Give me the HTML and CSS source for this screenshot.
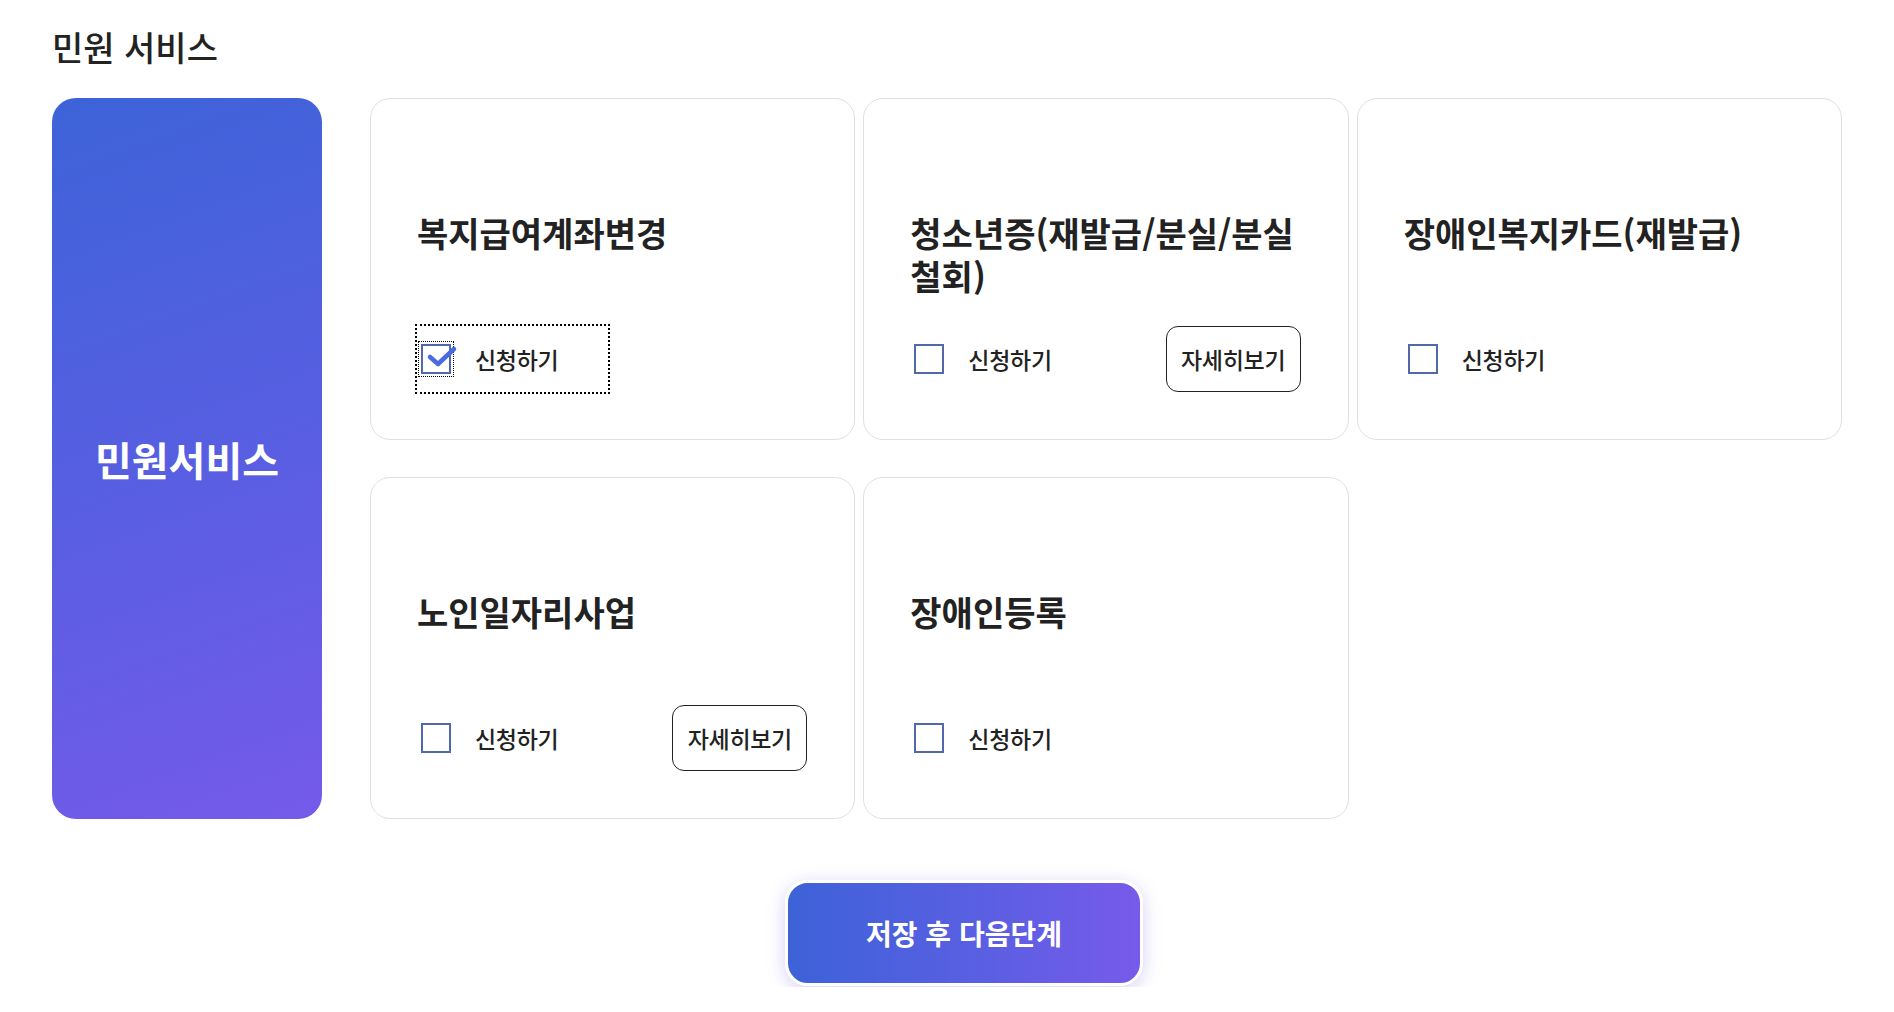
FILE: index.html
```html
<!DOCTYPE html>
<html lang="ko">
<head>
<meta charset="utf-8">
<title>민원 서비스</title>
<link rel="stylesheet" href="styles.css">
</head>
<body>
<div class="page">
  <h2 class="page-title">민원 서비스</h2>
  <div class="section">
    <div class="side-panel">민원서비스</div>
    <div class="card-grid">
      <div class="card">
        <h3 class="card-title">복지급여계좌변경</h3>
        <div class="card-row">
          <label class="apply focused">
            <span class="box checked">
              <svg class="check" viewBox="0 0 30 30" width="30" height="30"><path d="M9 13 L17 20 L33 5" fill="none" stroke="#4a6ae0" stroke-width="4.5" stroke-linecap="round" stroke-linejoin="round"/></svg>
            </span>
            <span class="apply-text">신청하기</span>
          </label>
        </div>
      </div>
      <div class="card">
        <h3 class="card-title">청소년증(재발급/분실/분실철회)</h3>
        <div class="card-row">
          <label class="apply"><span class="box"></span><span class="apply-text">신청하기</span></label>
          <button class="detail-btn">자세히보기</button>
        </div>
      </div>
      <div class="card">
        <h3 class="card-title">장애인복지카드(재발급)</h3>
        <div class="card-row">
          <label class="apply"><span class="box"></span><span class="apply-text">신청하기</span></label>
        </div>
      </div>
      <div class="card">
        <h3 class="card-title">노인일자리사업</h3>
        <div class="card-row">
          <label class="apply"><span class="box"></span><span class="apply-text">신청하기</span></label>
          <button class="detail-btn">자세히보기</button>
        </div>
      </div>
      <div class="card">
        <h3 class="card-title">장애인등록</h3>
        <div class="card-row">
          <label class="apply"><span class="box"></span><span class="apply-text">신청하기</span></label>
        </div>
      </div>
    </div>
  </div>
  <div class="footer">
    <button class="next-btn">저장 후 다음단계</button>
  </div>
</div>
</body>
</html>
```
FILE: styles.css
```css
* { box-sizing: border-box; }
html, body {
  margin: 0;
  padding: 0;
  background: #fff;
}
body {
  font-family: "Noto Sans CJK KR", "Noto Sans", sans-serif;
  color: #222;
}
.page {
  padding: 0 18px 0 52px;
}
.page-title {
  margin: 23px 0 28px;
  font-size: 34px;
  line-height: 47px;
  font-weight: 500;
  letter-spacing: 0;
  color: #222;
}
.section {
  display: flex;
  gap: 48px;
  align-items: stretch;
}
.side-panel {
  width: 270px;
  flex: none;
  border-radius: 24px;
  background: linear-gradient(160deg, #3d63d8 0%, #5a5ee2 55%, #755ae9 100%);
  color: #fff;
  font-size: 40px;
  font-weight: 700;
  letter-spacing: 0;
  display: flex;
  align-items: center;
  justify-content: center;
}
.card-grid {
  width: 1472px;
  display: grid;
  grid-template-columns: repeat(3, 1fr);
  column-gap: 8px;
  row-gap: 37px;
}
.card {
  height: 342px;
  border: 1px solid #e0e0e0;
  border-radius: 20px;
  padding: 112px 47px 47px 46px;
  display: flex;
  flex-direction: column;
}
.card-title {
  margin: 0 0 29px;
  min-height: 86px;
  font-size: 34px;
  line-height: 43px;
  font-weight: 700;
  letter-spacing: 0;
  color: #222;
}
.card-row {
  height: 66px;
  display: flex;
  align-items: center;
  justify-content: space-between;
}
.apply {
  width: 191px;
  height: 66px;
  display: flex;
  align-items: center;
  gap: 24px;
  padding-left: 4px;
}
.apply.focused {
  outline: 2px dotted #000;
}
.box {
  position: relative;
  width: 30px;
  height: 30px;
  flex: none;
  border: 2px solid #5268ac;
  background: #fff;
}
.focused .box {
  outline: 1px dotted #000;
  outline-offset: 2px;
}
.check {
  position: absolute;
  left: -2px;
  top: -2px;
  overflow: visible;
}
.apply-text {
  font-size: 23px;
  font-weight: 500;
  letter-spacing: -0.3px;
  color: #222;
}
.detail-btn {
  width: 135px;
  height: 66px;
  border: 1px solid #222;
  border-radius: 12px;
  background: #fff;
  font-family: inherit;
  font-size: 23px;
  font-weight: 500;
  letter-spacing: -0.3px;
  color: #222;
  padding: 0;
}
.footer {
  margin-top: 41px;
  height: 127px;
  overflow: hidden;
  display: flex;
  justify-content: center;
  padding-top: 20px;
}
.next-btn {
  width: 358px;
  height: 106px;
  border: 3px solid #fff;
  border-radius: 23px;
  background: linear-gradient(90deg, #3d62d8 0%, #5a5fe2 55%, #775aea 100%);
  box-shadow: 0 4px 18px rgba(104, 90, 220, 0.28);
  color: #fff;
  font-family: inherit;
  font-size: 28px;
  font-weight: 700;
  letter-spacing: 0;
  padding: 0;
}
```
